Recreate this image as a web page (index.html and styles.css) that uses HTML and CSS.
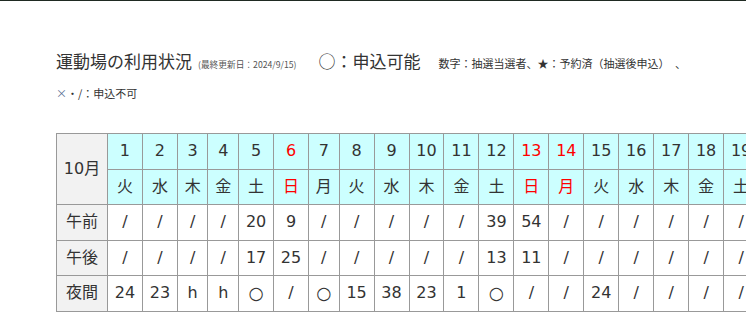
FILE: index.html
```html
<!DOCTYPE html>
<html lang="ja">
<head>
<meta charset="utf-8">
<title>運動場の利用状況</title>
<link rel="stylesheet" href="styles.css">
</head>
<body>
<div class="topbar"></div>
<main class="page">
  <div class="heading">
    <h2 class="title">運動場の利用状況</h2>
    <span class="updated">(最終更新日：2024/9/15)</span>
    <span class="legend-main">○：申込可能</span>
    <span class="legend-sub">数字：抽選当選者、★：予約済（抽選後申込）　、</span>
  </div>
  <p class="legend-line2"><span class="cross">×</span>・/：申込不可</p>

  <div class="table-wrap">
    <table class="schedule">
      <tr class="days">
        <th class="month" rowspan="2">10月</th>
        <th>1</th><th>2</th><th>3</th><th>4</th><th>5</th><th class="red">6</th><th>7</th><th>8</th><th>9</th><th>10</th><th>11</th><th>12</th><th class="red">13</th><th class="red">14</th><th>15</th><th>16</th><th>17</th><th>18</th><th>19</th>
      </tr>
      <tr class="days">
        <th>火</th><th>水</th><th>木</th><th>金</th><th>土</th><th class="red">日</th><th>月</th><th>火</th><th>水</th><th>木</th><th>金</th><th>土</th><th class="red">日</th><th class="red">月</th><th>火</th><th>水</th><th>木</th><th>金</th><th>土</th>
      </tr>
      <tr>
        <th class="slot">午前</th>
        <td>/</td><td>/</td><td>/</td><td>/</td><td>20</td><td>9</td><td>/</td><td>/</td><td>/</td><td>/</td><td>/</td><td>39</td><td>54</td><td>/</td><td>/</td><td>/</td><td>/</td><td>/</td><td>/</td>
      </tr>
      <tr>
        <th class="slot">午後</th>
        <td>/</td><td>/</td><td>/</td><td>/</td><td>17</td><td>25</td><td>/</td><td>/</td><td>/</td><td>/</td><td>/</td><td>13</td><td>11</td><td>/</td><td>/</td><td>/</td><td>/</td><td>/</td><td>/</td>
      </tr>
      <tr>
        <th class="slot">夜間</th>
        <td>24</td><td>23</td><td>h</td><td>h</td><td class="mark">○</td><td>/</td><td class="mark">○</td><td>15</td><td>38</td><td>23</td><td>1</td><td class="mark">○</td><td>/</td><td>/</td><td>24</td><td>/</td><td>/</td><td>/</td><td>/</td>
      </tr>
    </table>
  </div>
</main>
</body>
</html>
```

FILE: styles.css
```css
html, body {
  margin: 0;
  padding: 0;
  background: #ffffff;
  overflow: hidden;
}

body {
  font-family: "DejaVu Sans", "Noto Sans CJK JP", sans-serif;
  color: #333333;
}

.topbar {
  height: 1px;
  background: #1f2a22;
}

.page {
  padding: 47px 0 0 56px;
}

.heading {
  display: flex;
  align-items: baseline;
  white-space: nowrap;
  line-height: 26px;
}

.title {
  margin: 0;
  font-family: "Noto Sans CJK JP", sans-serif;
  font-size: 17px;
  font-weight: normal;
  color: #333333;
}

.updated {
  margin-left: 6px;
  font-family: "Noto Sans CJK JP", sans-serif;
  font-size: 8.7px;
  color: #555555;
}

.legend-main {
  margin-left: 22px;
  font-family: "Noto Sans CJK JP", sans-serif;
  font-size: 17px;
  color: #333333;
}

.legend-sub {
  margin-left: 18px;
  font-family: "Noto Sans CJK JP", sans-serif;
  font-size: 11px;
  color: #333333;
}

.legend-line2 {
  margin: 7px 0 0 0;
  font-family: "Noto Sans CJK JP", sans-serif;
  font-size: 11px;
  line-height: 16px;
  color: #333333;
}

.cross {
  color: #5a6f95;
}

.table-wrap {
  margin-top: 32px;
  overflow: hidden;
}

.schedule {
  border-collapse: collapse;
  font-size: 16px;
  white-space: nowrap;
}

.schedule th,
.schedule td {
  border: 1px solid #999999;
  padding: 6px 6.8px;
  line-height: 22.6px;
  text-align: center;
  font-weight: normal;
  color: #333333;
}

.schedule td.mark {
  font-size: 17.5px;
}

.schedule .days th {
  background: #ccffff;
}

.schedule .month,
.schedule .slot {
  background: #f2f2f2;
}

.schedule .days th.month {
  background: #f2f2f2;
}

.schedule .days th.red {
  color: #ff0000;
}
```
